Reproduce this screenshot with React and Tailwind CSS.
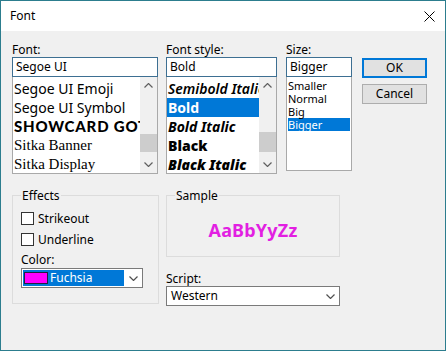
import React from "react";

// Small chevron used by scrollbars and combo boxes
function Chevron({ up = false, className = "" }) {
  return (
    <svg width="9" height="5" viewBox="0 0 9 5" className={className}>
      <polyline
        points={up ? "0.5,4.5 4.5,0.5 8.5,4.5" : "0.5,0.5 4.5,4.5 8.5,0.5"}
        fill="none"
        stroke="currentColor"
        strokeWidth="1.2"
      />
    </svg>
  );
}

function ScrollBar({ thumbTop, thumbHeight }) {
  return (
    <div className="w-[17px] h-full bg-[#f0f0f0] flex flex-col items-center text-[#606060]">
      <div className="h-[17px] flex items-center justify-center">
        <Chevron up />
      </div>
      <div className="flex-1 w-full flex flex-col">
        <div style={{ height: thumbTop }} />
        <div className="w-full bg-[#cdcdcd]" style={{ height: thumbHeight }} />
      </div>
      <div className="h-[17px] flex items-center justify-center">
        <Chevron />
      </div>
    </div>
  );
}

function Row({ children, selected, className = "" }) {
  return (
    <div
      className={`h-[19px] leading-[19px] pl-[1px] whitespace-nowrap overflow-hidden ${
        selected ? "bg-[#0078d7] text-white" : "text-black"
      } ${className}`}
    >
      {children}
    </div>
  );
}

function Combo({ children, className = "" }) {
  return (
    <div
      className={`h-[20px] bg-white border border-[#7a7a7a] flex items-center ${className}`}
    >
      <div className="flex-1 flex items-center h-full min-w-0">{children}</div>
      <div className="w-[17px] flex justify-center text-[#505050]">
        <Chevron />
      </div>
    </div>
  );
}

export default function App() {
  return (
    <div className="w-[446px] h-[351px] border border-[#2c7d8e] bg-[#f0f0f0] flex flex-col font-['Noto_Sans',sans-serif] text-[12px] text-black overflow-hidden">
      {/* Title bar */}
      <div className="h-[30px] bg-white flex items-center justify-between pl-[9px] pr-[10px]">
        <span className="text-[12px]">Font</span>
        <svg width="11" height="11" viewBox="0 0 11 11">
          <path d="M0.5 0.5 L10.5 10.5 M10.5 0.5 L0.5 10.5" stroke="#000" strokeWidth="1" />
        </svg>
      </div>

      <div className="pt-[11px] pl-[11px] flex flex-col">
        {/* Top row */}
        <div className="flex">
          {/* Font */}
          <div className="w-[146px] flex flex-col">
            <div className="h-[15px] leading-[15px]">Font:</div>
            <div className="h-[20px] bg-white border border-[#3d6f92] flex items-center pl-[3px]">
              Segoe UI
            </div>
            <div className="h-[97px] bg-white border border-t-0 border-[#a9a9a9] flex">
              <div className="flex-1 min-w-0 pt-[2px] text-[14px]">
                <Row>Segoe UI Emoji</Row>
                <Row>Segoe UI Symbol</Row>
                <Row className="font-['Lato',sans-serif] font-black text-[15px] tracking-[0.8px]">
                  SHOWCARD GOTHIC
                </Row>
                <Row className="font-['Liberation_Serif',serif] text-[15px]">Sitka Banner</Row>
                <Row className="font-['Liberation_Serif',serif] text-[15px]">Sitka Display</Row>
              </div>
              <ScrollBar thumbTop={40} thumbHeight={18} />
            </div>
          </div>

          {/* Font style */}
          <div className="w-[111px] ml-[8px] flex flex-col">
            <div className="h-[15px] leading-[15px]">Font style:</div>
            <div className="h-[20px] bg-white border border-[#3d6f92] flex items-center pl-[3px]">
              Bold
            </div>
            <div className="h-[97px] bg-white border border-t-0 border-[#a9a9a9] flex">
              <div className="flex-1 min-w-0 pt-[2px] text-[14px]">
                <Row className="font-semibold italic">Semibold Italic</Row>
                <Row selected className="font-bold">
                  Bold
                </Row>
                <Row className="font-bold italic">Bold Italic</Row>
                <Row className="font-black">Black</Row>
                <Row className="font-black italic">Black Italic</Row>
              </div>
              <ScrollBar thumbTop={38} thumbHeight={20} />
            </div>
          </div>

          {/* Size */}
          <div className="w-[66px] ml-[9px] flex flex-col">
            <div className="h-[15px] leading-[15px]">Size:</div>
            <div className="h-[20px] bg-white border border-[#3d6f92] flex items-center pl-[3px]">
              Bigger
            </div>
            <div className="h-[94px] bg-white border border-t-0 border-[#a9a9a9] pt-[2px] px-[1px] text-[11px] leading-[13px]">
              <div className="h-[13px]">Smaller</div>
              <div className="h-[13px]">Normal</div>
              <div className="h-[13px]">Big</div>
              <div className="h-[13px] bg-[#0078d7] text-white">Bigger</div>
            </div>
          </div>

          {/* Buttons */}
          <div className="w-[65px] ml-[10px] mt-[16px] flex flex-col gap-[6px]">
            <button className="h-[20px] bg-[#e1e1e1] border-2 border-[#0078d7] flex items-center justify-center">
              OK
            </button>
            <button className="h-[20px] bg-[#e1e1e1] border border-[#adadad] flex items-center justify-center">
              Cancel
            </button>
          </div>
        </div>

        {/* Bottom row */}
        <div className="flex mt-[14px]">
          <fieldset className="w-[147px] h-[116px] border border-[#dcdcdc] px-[8px]">
            <legend className="px-[1px] leading-[15px] h-[15px]">Effects</legend>
            <div className="mt-[9px] flex items-center gap-[4px] h-[13px]">
              <div className="w-[13px] h-[13px] bg-white border border-[#333]" />
              <span>Strikeout</span>
            </div>
            <div className="mt-[8px] flex items-center gap-[4px] h-[13px]">
              <div className="w-[13px] h-[13px] bg-white border border-[#333]" />
              <span>Underline</span>
            </div>
            <div className="mt-[6px] h-[15px] leading-[15px]">Color:</div>
            <Combo className="w-[122px] mt-[1px]">
              <div className="ml-[1px] h-[16px] w-[101px] bg-[#0078d7] flex items-center pl-[1px]">
                <div className="w-[24px] h-[12px] bg-[#ff00ff] border border-[#202040]" />
                <span className="text-white ml-[2px]">Fuchsia</span>
              </div>
            </Combo>
          </fieldset>

          <div className="w-[174px] ml-[7px] flex flex-col">
            <fieldset className="h-[69px] border border-[#dcdcdc]">
              <legend className="ml-[8px] px-[1px] leading-[15px] h-[15px]">Sample</legend>
              <div className="h-[53px] flex items-center justify-center pt-[2px]">
                <span className="text-[18px] font-bold text-[#e21fe2] tracking-[0.2px]">AaBbYyZz</span>
              </div>
            </fieldset>
            <div className="mt-[14px] h-[15px] leading-[15px]">Script:</div>
            <Combo>
              <span className="pl-[4px]">Western</span>
            </Combo>
          </div>
        </div>
      </div>
    </div>
  );
}
